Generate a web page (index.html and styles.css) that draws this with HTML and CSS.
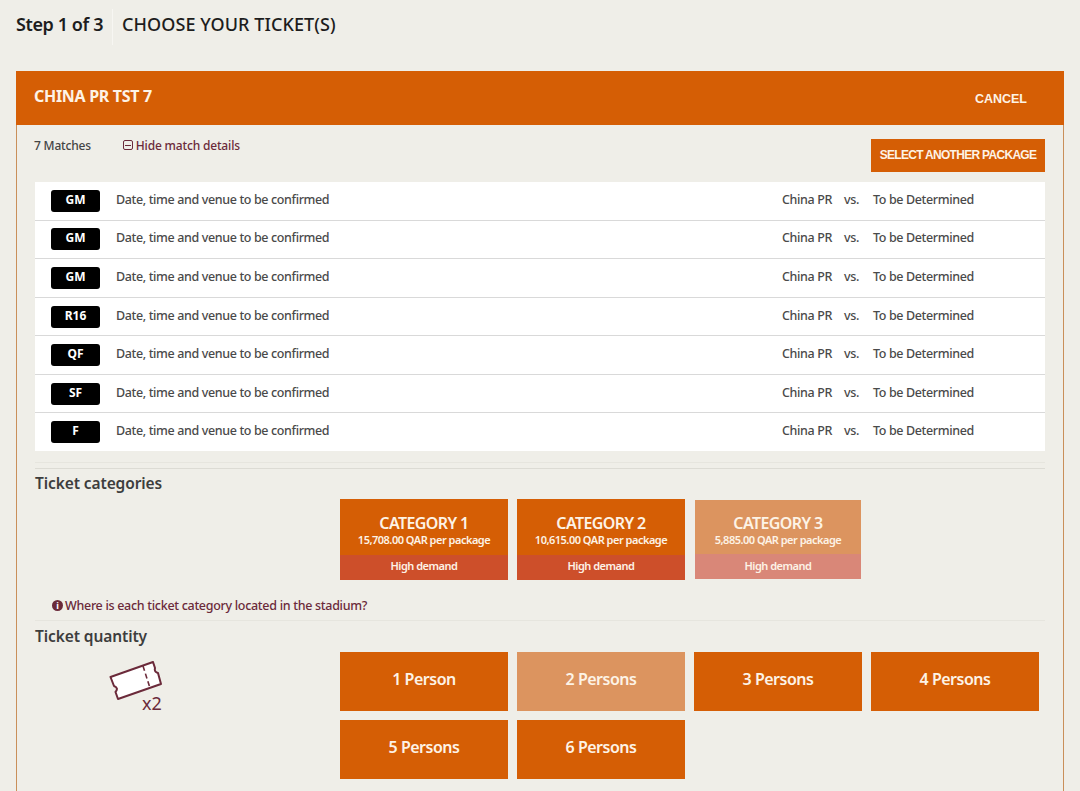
FILE: index.html
```html
<!DOCTYPE html>
<html lang="en">
<head>
<meta charset="utf-8">
<title>Choose your tickets</title>
<link rel="stylesheet" href="styles.css">
</head>
<body>
<header class="steps">
  <span class="step-count">Step 1 of 3</span>
  <h1 class="step-title">CHOOSE YOUR TICKET(S)</h1>
</header>
<main class="panel">
  <div class="panel-head">
    <h2 class="panel-title">CHINA PR TST 7</h2>
    <a class="cancel">CANCEL</a>
  </div>
  <div class="panel-body">
    <div class="toolbar">
      <span class="match-count">7 Matches</span>
      <a class="toggle"><span class="minus"></span>Hide match details</a>
      <a class="another">SELECT ANOTHER PACKAGE</a>
    </div>
    <ul class="matches">
      <li class="match"><b class="badge">GM</b><span>Date, time and venue to be confirmed</span><span>China PR</span><span>vs.</span><span>To be Determined</span></li>
      <li class="match"><b class="badge">GM</b><span>Date, time and venue to be confirmed</span><span>China PR</span><span>vs.</span><span>To be Determined</span></li>
      <li class="match"><b class="badge">GM</b><span>Date, time and venue to be confirmed</span><span>China PR</span><span>vs.</span><span>To be Determined</span></li>
      <li class="match"><b class="badge">R16</b><span>Date, time and venue to be confirmed</span><span>China PR</span><span>vs.</span><span>To be Determined</span></li>
      <li class="match"><b class="badge">QF</b><span>Date, time and venue to be confirmed</span><span>China PR</span><span>vs.</span><span>To be Determined</span></li>
      <li class="match"><b class="badge">SF</b><span>Date, time and venue to be confirmed</span><span>China PR</span><span>vs.</span><span>To be Determined</span></li>
      <li class="match"><b class="badge">F</b><span>Date, time and venue to be confirmed</span><span>China PR</span><span>vs.</span><span>To be Determined</span></li>
    </ul>
    <section class="categories-section">
      <h3 class="section-title">Ticket categories</h3>
      <div class="categories">
        <div class="category"><div class="cat-main"><strong>CATEGORY 1</strong><span>15,708.00 QAR per package</span></div><div class="cat-demand">High demand</div></div>
        <div class="category"><div class="cat-main"><strong>CATEGORY 2</strong><span>10,615.00 QAR per package</span></div><div class="cat-demand">High demand</div></div>
        <div class="category is-selected"><div class="cat-main"><strong>CATEGORY 3</strong><span>5,885.00 QAR per package</span></div><div class="cat-demand">High demand</div></div>
      </div>
      <a class="where"><span class="info">i</span>Where is each ticket category located in the stadium?</a>
    </section>
    <section class="quantity-section">
      <h3 class="section-title">Ticket quantity</h3>
      <div class="quantity-row">
        <div class="ticket-visual">
          <svg class="ticket" width="56" height="42" viewBox="0 0 56 42" aria-hidden="true">
            <path d="M1.500 16 L44 1 L46 7 Q45 11 49 12 L52 23 L9 38 L6.500 31 Q10 27 5 25 Z" fill="#fff" stroke="#6b2a3a" stroke-width="2" stroke-linejoin="round"/>
            <path d="M34 5 L41 27" fill="none" stroke="#6b2a3a" stroke-width="1.600" stroke-dasharray="5 3"/>
          </svg>
          <span class="times">x2</span>
        </div>
        <div class="persons">
          <button class="person">1 Person</button>
          <button class="person is-selected">2 Persons</button>
          <button class="person">3 Persons</button>
          <button class="person">4 Persons</button>
          <button class="person">5 Persons</button>
          <button class="person">6 Persons</button>
        </div>
      </div>
    </section>
  </div>
</main>
</body>
</html>
```
FILE: styles.css
```css
* { box-sizing: border-box; }
html, body { margin: 0; height: 791px; overflow: hidden; }
body {
  background: #efeee8;
  font-family: "Noto Sans", "Liberation Sans", sans-serif;
  color: #444;
}
.steps {
  height: 71px;
  padding: 9px 0 0 16px;
  display: flex;
  align-items: flex-start;
}
.step-count {
  font-size: 18px;
  font-weight: 600;
  line-height: 30px;
  color: #1d1d1d;
  letter-spacing: -0.4px;
  padding-right: 9px;
  height: 36px;
  border-right: 1px solid #f7f6f2;
}
.step-title {
  margin: 0 0 0 9px;
  font-size: 18px;
  font-weight: 500;
  line-height: 30px;
  color: #1d1d1d;
  letter-spacing: 0.08px;
}
.panel { margin: 0 16px; }
.panel-head {
  height: 54px;
  background: #d55e05;
  display: flex;
  align-items: center;
  justify-content: space-between;
  padding: 0 37px 0 18px;
  color: #fff;
}
.panel-title {
  margin: 0 0 5px;
  font-size: 16px;
  font-weight: 700;
  letter-spacing: -0.3px;
  color: #fdf3e6;
}
.cancel {
  font-family: "Liberation Sans", sans-serif;
  font-size: 12.500px;
  font-weight: 700;
  margin-top: 1px;
  color: #fdf3e6;
}
.panel-body {
  border: 1px solid #c98f5a;
  border-width: 0 1px;
  padding: 0 18px 40px;
  height: 700px;
}
.toolbar {
  height: 57px;
  display: flex;
  align-items: flex-start;
  font-size: 12px;
  font-weight: 500;
}
.match-count { margin: 12px 0 0 -1px; letter-spacing: -0.2px; color: #444; }
.toggle {
  margin: 12px 0 0 32px;
  display: flex;
  align-items: center;
  height: 16px;
  color: #6b2a3a;
  letter-spacing: -0.17px;
}
.minus {
  width: 10px;
  height: 10px;
  margin-right: 3px;
  border: 1px solid #6b2a3a;
  border-radius: 2px;
  background: linear-gradient(#6b2a3a, #6b2a3a) center / 6px 1px no-repeat;
}
.another {
  margin: 14px 0 0 auto;
  width: 174px;
  height: 33px;
  padding-bottom: 2px;
  background: #d55e05;
  color: #fdf3e6;
  font-family: "Liberation Sans", sans-serif;
  font-size: 12px;
  font-weight: 700;
  letter-spacing: -0.7px;
  display: flex;
  align-items: center;
  justify-content: center;
}
.matches {
  list-style: none;
  margin: 0;
  padding: 0;
  height: 269px;
  background: #fff;
  display: flex;
  flex-direction: column;
}
.match {
  flex: 1;
  display: grid;
  grid-template-columns: 49px 1fr 62px 29px 172px;
  column-gap: 0;
  align-items: center;
  padding-left: 16px;
  font-size: 12.500px;
  font-weight: 500;
  letter-spacing: -0.37px;
  color: #4a4a4a;
  border-bottom: 1px solid #d9d9d9;
}
.match > span { margin-bottom: 3px; }
.match:last-child { border-bottom: 0; }
.match > span:nth-child(2) { padding-left: 16px; }
.badge {
  width: 49px;
  height: 22px;
  background: #000;
  border-radius: 3px;
  color: #fff;
  font-size: 12px;
  font-weight: 700;
  line-height: 20px;
  text-align: center;
  letter-spacing: 0;
}
.categories-section { margin-top: 11px; }
.categories-section::before {
  content: "";
  display: block;
  height: 5px;
  border-top: 1px solid #e6e5de;
  border-bottom: 1px solid #dcdbd4;
}
.section-title {
  margin: 0;
  font-size: 15.500px;
  font-weight: 600;
  line-height: 20px;
  color: #3d3d3d;
  letter-spacing: -0.1px;
}
.categories-section .section-title { margin-top: 4px; }
.categories {
  margin: 6px 0 0 305px;
  display: grid;
  grid-template-columns: repeat(3, 168px);
  column-gap: 9px;
}
.category {
  height: 81px;
  background: #d55e05;
  color: #fdf3e6;
  display: flex;
  flex-direction: column;
  text-align: center;
}
.category.is-selected {
  background: #dc945f;
  border: 1px solid #efeee8;
}
.cat-main {
  flex: 1;
  display: flex;
  flex-direction: column;
  justify-content: center;
  padding-top: 9px;
}
.cat-main strong {
  font-size: 16px;
  font-weight: 600;
  line-height: 17px;
  letter-spacing: -0.6px;
}
.cat-main span {
  font-size: 11px;
  font-weight: 600;
  line-height: 16px;
  letter-spacing: -0.5px;
}
.cat-demand {
  height: 25px;
  background: #cd4f2a;
  font-size: 11px;
  font-weight: 600;
  line-height: 21px;
  letter-spacing: -0.5px;
}
.is-selected .cat-demand { background: #d98778; line-height: 23px; }
.where {
  display: flex;
  align-items: center;
  height: 18px;
  margin: 16px 0 0 17px;
  font-size: 12.500px;
  font-weight: 500;
  letter-spacing: -0.3px;
  color: #6b2a3a;
}
.info {
  width: 11px;
  height: 11px;
  margin-right: 2px;
  border-radius: 50%;
  background: #6b2a3a;
  color: #fff;
  font-size: 9px;
  font-weight: 700;
  line-height: 11px;
  text-align: center;
}
.quantity-section {
  margin-top: 6px;
  border-top: 1px solid #e6e5de;
  padding-top: 5px;
}
.quantity-row {
  display: grid;
  grid-template-columns: 305px 1fr;
  margin-top: 6px;
}
.ticket-visual {
  display: flex;
  flex-wrap: wrap;
  align-content: flex-start;
  justify-content: flex-start;
  padding: 9px 0 0 74px;
  position: relative;
}
.ticket { display: block; }
.times {
  position: absolute;
  left: 107px;
  top: 40px;
  font-size: 18px;
  line-height: 22px;
  color: #6b2a3a;
}
.persons {
  display: flex;
  flex-wrap: wrap;
  gap: 9px;
}
.person {
  width: 168px;
  height: 59px;
  padding: 0 0 6px;
  border: 0;
  background: #d55e05;
  color: #fdf3e6;
  font-family: inherit;
  font-size: 16px;
  font-weight: 600;
  letter-spacing: -0.5px;
}
.person.is-selected { background: #dc945f; }
```
